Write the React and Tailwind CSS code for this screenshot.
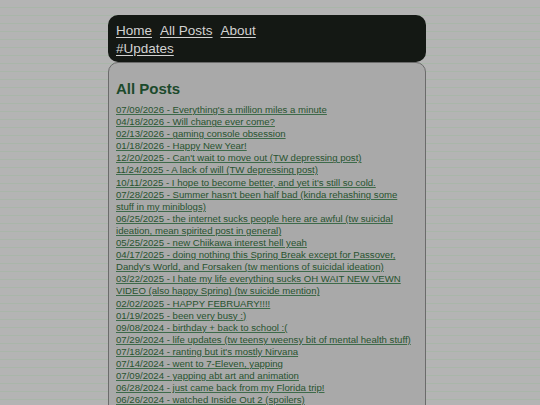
import React from "react";

const posts = [
  "07/09/2026 - Everything's a million miles a minute",
  "04/18/2026 - Will change ever come?",
  "02/13/2026 - gaming console obsession",
  "01/18/2026 - Happy New Year!",
  "12/20/2025 - Can't wait to move out (TW depressing post)",
  "11/24/2025 - A lack of will (TW depressing post)",
  "10/11/2025 - I hope to become better, and yet it's still so cold.",
  "07/28/2025 - Summer hasn't been half bad (kinda rehashing some stuff in my miniblogs)",
  "06/25/2025 - the internet sucks people here are awful (tw suicidal ideation, mean spirited post in general)",
  "05/25/2025 - new Chiikawa interest hell yeah",
  "04/17/2025 - doing nothing this Spring Break except for Passover, Dandy's World, and Forsaken (tw mentions of suicidal ideation)",
  "03/22/2025 - I hate my life everything sucks OH WAIT NEW VEWN VIDEO (also happy Spring) (tw suicide mention)",
  "02/02/2025 - HAPPY FEBRUARY!!!!",
  "01/19/2025 - been very busy :)",
  "09/08/2024 - birthday + back to school :(",
  "07/29/2024 - life updates (tw teensy weensy bit of mental health stuff)",
  "07/18/2024 - ranting but it's mostly Nirvana",
  "07/14/2024 - went to 7-Eleven, yapping",
  "07/09/2024 - yapping abt art and animation",
  "06/28/2024 - just came back from my Florida trip!",
  "06/26/2024 - watched Inside Out 2 (spoilers)",
  "06/20/2024 - summer vacation yay",
];

const App = () => {
  return (
    <div className="h-[405px] overflow-hidden bg-[repeating-linear-gradient(to_bottom,#b4b4b4_0px,#b4b4b4_7px,#a9b6a9_7px,#a9b6a9_8px)] pt-[15px] font-['Liberation_Sans',sans-serif]">
      <div className="ml-[108px] w-[318px]">
        {/* nav */}
        <nav className="rounded-[10px] bg-[#141814] px-[8px] pt-[7px] pb-[4px] text-[13.5px] leading-[18px] text-[#d2d2d2]">
          <div className="flex gap-x-[8px]">
            <a href="#" className="underline underline-offset-2">Home</a>
            <a href="#" className="underline underline-offset-2">All Posts</a>
            <a href="#" className="underline underline-offset-2">About</a>
          </div>
          <div>
            <a href="#" className="underline underline-offset-2">#Updates</a>
          </div>
        </nav>

        {/* posts */}
        <main className="rounded-[10px] border border-[#6b6b6b] bg-[#a9a9a9] pl-[7px] pr-[11px] pt-[16px] pb-4">
          <h1 className="mb-[5px] text-[15px] font-bold leading-[20px] text-[#1c4a2c]">
            All Posts
          </h1>
          <ul className="text-[9.6px] leading-[12.1px] text-[#28532f]">
            {posts.map((p) => (
              <li key={p}>
                <a href="#" className="underline decoration-[#3d6b4a]">
                  {p}
                </a>
              </li>
            ))}
          </ul>
        </main>
      </div>
    </div>
  );
};

export default App;
